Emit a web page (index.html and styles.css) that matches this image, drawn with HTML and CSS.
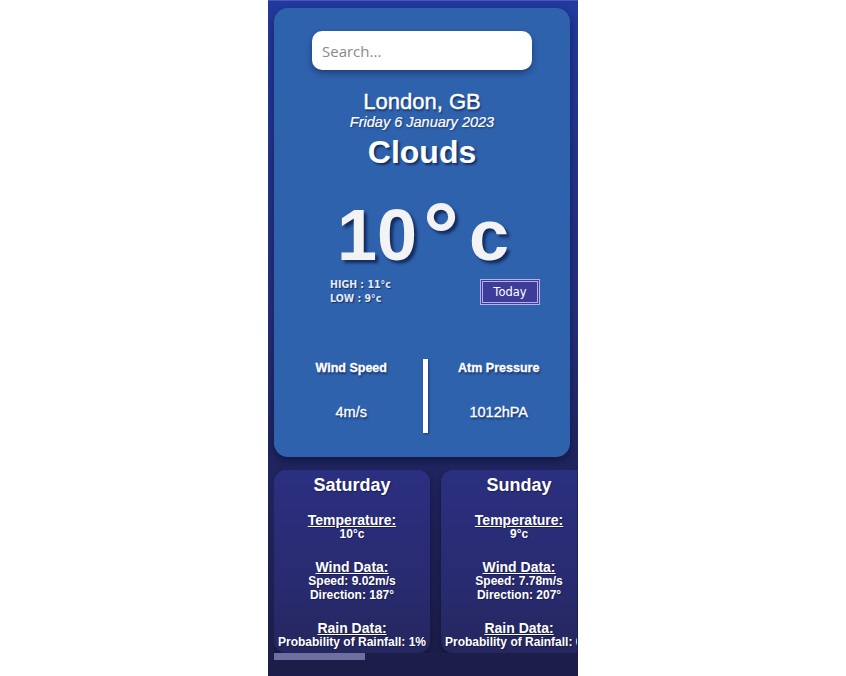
FILE: index.html
```html
<!DOCTYPE html>
<html lang="en">
<head>
<meta charset="utf-8">
<title>Weather</title>
<link rel="stylesheet" href="styles.css">
</head>
<body>
<div class="app">
  <section class="main-card">
    <input class="search" type="text" placeholder="Search...">
    <h1 class="city">London, GB</h1>
    <p class="date">Friday 6 January 2023</p>
    <h2 class="condition">Clouds</h2>
    <div class="temp">10<span class="deg">°</span>c</div>
    <div class="minmax-row">
      <div class="minmax">
        <div>HIGH : 11°c</div>
        <div>LOW : 9°c</div>
      </div>
      <button class="today">Today</button>
    </div>
    <div class="stats">
      <div class="stat">
        <div class="stat-label">Wind Speed</div>
        <div class="stat-value">4m/s</div>
      </div>
      <div class="divider"></div>
      <div class="stat">
        <div class="stat-label">Atm Pressure</div>
        <div class="stat-value">1012hPA</div>
      </div>
    </div>
  </section>
  <div class="forecast">
    <article class="day">
      <h3 class="day-name">Saturday</h3>
      <div class="block"><div class="block-title">Temperature:</div><div>10°c</div></div>
      <div class="block"><div class="block-title">Wind Data:</div><div>Speed: 9.02m/s</div><div>Direction: 187°</div></div>
      <div class="block"><div class="block-title">Rain Data:</div><div>Probability of Rainfall: 1%</div></div>
    </article>
    <article class="day">
      <h3 class="day-name">Sunday</h3>
      <div class="block"><div class="block-title">Temperature:</div><div>9°c</div></div>
      <div class="block"><div class="block-title">Wind Data:</div><div>Speed: 7.78m/s</div><div>Direction: 207°</div></div>
      <div class="block"><div class="block-title">Rain Data:</div><div>Probability of Rainfall: 0%</div></div>
    </article>
    <article class="day">
      <h3 class="day-name">Monday</h3>
      <div class="block"><div class="block-title">Temperature:</div><div>8°c</div></div>
      <div class="block"><div class="block-title">Wind Data:</div><div>Speed: 6.41m/s</div><div>Direction: 223°</div></div>
      <div class="block"><div class="block-title">Rain Data:</div><div>Probability of Rainfall: 4%</div></div>
    </article>
    <article class="day">
      <h3 class="day-name">Tuesday</h3>
      <div class="block"><div class="block-title">Temperature:</div><div>9°c</div></div>
      <div class="block"><div class="block-title">Wind Data:</div><div>Speed: 5.87m/s</div><div>Direction: 245°</div></div>
      <div class="block"><div class="block-title">Rain Data:</div><div>Probability of Rainfall: 8%</div></div>
    </article>
    <article class="day">
      <h3 class="day-name">Wednesday</h3>
      <div class="block"><div class="block-title">Temperature:</div><div>11°c</div></div>
      <div class="block"><div class="block-title">Wind Data:</div><div>Speed: 8.13m/s</div><div>Direction: 198°</div></div>
      <div class="block"><div class="block-title">Rain Data:</div><div>Probability of Rainfall: 2%</div></div>
    </article>
    <article class="day">
      <h3 class="day-name">Thursday</h3>
      <div class="block"><div class="block-title">Temperature:</div><div>10°c</div></div>
      <div class="block"><div class="block-title">Wind Data:</div><div>Speed: 7.05m/s</div><div>Direction: 210°</div></div>
      <div class="block"><div class="block-title">Rain Data:</div><div>Probability of Rainfall: 3%</div></div>
    </article>
  </div>
  <div class="scrollbar"><div class="scroll-thumb"></div></div>
</div>
</body>
</html>
```

FILE: styles.css
```css
* { box-sizing: border-box; }

html, body {
  margin: 0;
  padding: 0;
  background: #ffffff;
}

body {
  font-family: "Liberation Sans", Arial, sans-serif;
  color: #ffffff;
}

.app {
  width: 310px;
  height: 676px;
  margin: 0 auto;
  padding: 8px 0 0 6px;
  overflow: hidden;
  background: linear-gradient(180deg, #223a9f 0%, #25307f 45%, #1f2258 75%, #1c1d48 100%);
  border-top: 1px solid #4b55b8;
  display: flex;
  flex-direction: column;
}

.main-card {
  width: 296px;
  margin-top: -1px;
  background: #2f62ad;
  border-radius: 14px;
  box-shadow: 0 4px 8px rgba(8, 12, 40, 0.55);
  padding: 23px 0 24px 0;
  display: flex;
  flex-direction: column;
  align-items: center;
  text-align: center;
}

.search {
  width: 220px;
  height: 39px;
  margin: 0;
  border: none;
  border-radius: 10px;
  padding: 0 10px;
  background: #ffffff;
  box-shadow: 0 3px 6px rgba(10, 20, 60, 0.45);
  font-family: "Open Sans", "DejaVu Sans", sans-serif;
  font-size: 15px;
  color: #333;
  outline: none;
}

.search::placeholder {
  color: #8a8a8a;
}

.city {
  margin: 19px 0 0 0;
  font-size: 22px;
  font-weight: normal;
  line-height: 25px;
  -webkit-text-stroke: 0.4px #ffffff;
  text-shadow: 1px 2px 2px rgba(10, 25, 70, 0.7);
}

.date {
  margin: 0;
  font-size: 14.5px;
  font-style: italic;
  line-height: 17px;
  -webkit-text-stroke: 0.2px #ffffff;
  text-shadow: 1px 1px 2px rgba(10, 25, 70, 0.6);
}

.condition {
  margin: 3px 0 0 0;
  font-size: 32px;
  font-weight: bold;
  line-height: 37px;
  text-shadow: 2px 2px 2px rgba(10, 25, 70, 0.7);
}

.temp {
  margin: 23px 0 0 2px;
  font-size: 72px;
  font-weight: bold;
  line-height: 83px;
  height: 83px;
  color: #f3f3f3;
  white-space: nowrap;
  text-shadow: 3px 3px 3px rgba(10, 25, 70, 0.75);
}

.deg {
  font-size: 90px;
  line-height: 0;
  margin: 0 10px 0 6px;
  position: relative;
  top: 6px;
}

.minmax-row {
  align-self: stretch;
  display: flex;
  justify-content: space-between;
  align-items: flex-start;
  padding: 0 30px 0 56px;
  margin-top: 1px;
}

.minmax {
  font-family: "DejaVu Sans Condensed", "DejaVu Sans", Verdana, sans-serif;
  font-weight: bold;
  font-size: 10.5px;
  line-height: 13.5px;
  text-align: left;
  color: #e4e9f8;
  text-shadow: 1px 1px 1px rgba(10, 25, 70, 0.7);
}

.today {
  width: 60px;
  height: 26px;
  margin-top: 1px;
  background: #3d3d99;
  border: 3px double #b7b0ea;
  color: #ffffff;
  font-family: "DejaVu Sans", Tahoma, sans-serif;
  font-size: 11.5px;
  padding: 0;
}

.stats {
  align-self: stretch;
  display: grid;
  grid-template-columns: 1fr 5px 1fr;
  height: 74px;
  margin-top: 54px;
  padding-left: 6px;
}

.stat {
  padding-top: 1.5px;
}

.stat-label {
  font-size: 12.5px;
  font-weight: bold;
  line-height: 15px;
  -webkit-text-stroke: 0.3px #ffffff;
  text-shadow: 1px 2px 2px rgba(10, 25, 70, 0.7);
}

.stat-value {
  margin-top: 28.5px;
  font-size: 14.5px;
  line-height: 17px;
  -webkit-text-stroke: 0.3px #ffffff;
  text-shadow: 1px 2px 2px rgba(10, 25, 70, 0.7);
}

.divider {
  background: #ffffff;
  box-shadow: 1px 1px 2px rgba(10, 25, 70, 0.5);
}

.forecast {
  margin-top: 13px;
  display: flex;
  gap: 11px;
  overflow: hidden;
  width: 303px;
  flex: 0 0 auto;
}

.day {
  flex: 0 0 auto;
  padding: 4.5px 4px 3px 4px;
  border-radius: 12px;
  background: linear-gradient(180deg, #2b2f80 0%, #282b70 60%, #25275f 100%);
  box-shadow: 0 3px 6px rgba(5, 8, 30, 0.45);
  text-align: center;
  font-size: 12px;
  font-weight: bold;
  line-height: 13.8px;
  text-shadow: 1px 1px 1px rgba(5, 8, 30, 0.4);
}

.day-name {
  margin: 0;
  font-size: 18px;
  line-height: 20.7px;
}

.block {
  margin-top: 17px;
}

.block-title {
  font-size: 14px;
  line-height: 16.1px;
  text-decoration: underline;
}

.scrollbar {
  width: 303px;
  height: 7px;
  flex: 0 0 auto;
}

.scroll-thumb {
  width: 91px;
  height: 7px;
  background: #6e6ea0;
}
```
